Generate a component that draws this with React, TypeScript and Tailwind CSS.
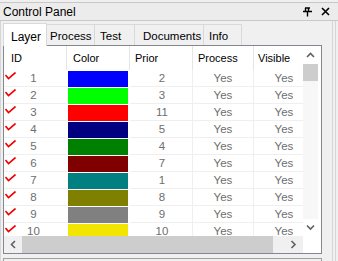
import React from "react";

const rows = [
  { id: 1, color: "#0000ff", prior: 2 },
  { id: 2, color: "#00ff00", prior: 3 },
  { id: 3, color: "#ff0000", prior: 11 },
  { id: 4, color: "#000080", prior: 5 },
  { id: 5, color: "#008000", prior: 4 },
  { id: 6, color: "#800000", prior: 7 },
  { id: 7, color: "#008080", prior: 1 },
  { id: 8, color: "#808000", prior: 8 },
  { id: 9, color: "#808080", prior: 9 },
  { id: 10, color: "#f2e600", prior: 10 },
];

const tabs = [
  { name: "Layer", w: "w-[44px]", pl: "pl-[7px]" },
  { name: "Process", w: "w-[48px]", pl: "pl-[3px]" },
  { name: "Test", w: "w-[40px]", pl: "pl-[5px]" },
  { name: "Documents", w: "w-[69px]", pl: "pl-[8px]" },
  { name: "Info", w: "w-[38px]", pl: "pl-[5px]" },
];

function Check() {
  return (
    <svg width="11" height="8" viewBox="0 0 11 8" className="mt-[2px] ml-[1px]">
      <polyline points="0.5,3 3.5,6.5 10.5,0.5" fill="none" stroke="#f00000" strokeWidth="1.6" />
    </svg>
  );
}

function Arrow({ dir }: { dir: "up" | "down" | "left" | "right" }) {
  const pts = {
    up: "1,6 4.5,2.5 8,6",
    down: "1,2.5 4.5,6 8,2.5",
    left: "6,1 2.5,4.5 6,8",
    right: "2.5,1 6,4.5 2.5,8",
  }[dir];
  return (
    <svg width="9" height="9" viewBox="0 0 9 9">
      <polyline points={pts} fill="none" stroke="#606060" strokeWidth="1.6" />
    </svg>
  );
}

export default function App() {
  return (
    <div
      className="w-[338px] h-[261px] bg-[#f0f0f0] overflow-hidden text-[11px] text-black"
      style={{ fontFamily: '"Liberation Sans", Arial, sans-serif' }}
    >
      {/* title bar */}
      <div className="mt-[2px] h-[19px] flex items-center border-y border-[#c8c8c8] bg-[#ececec] pl-[3px] pr-[8px]">
        <span className="text-[12px]">Control Panel</span>
        <div className="ml-auto flex items-center gap-[9px]">
          <svg width="9" height="10" viewBox="0 0 9 10">
            <path d="M0 4.5h9M2 1h5M2.5 1v3.5M5.5 1v3.5M4.5 4.5v5" stroke="#000" strokeWidth="1.4" fill="none" />
          </svg>
          <svg width="9" height="9" viewBox="0 0 9 9">
            <path d="M1 1l7 7M8 1l-7 7" stroke="#000" strokeWidth="1.6" />
          </svg>
        </div>
      </div>

      <div className="flex">
        <div className="w-[333px] border-l border-r border-[#d6d6d6]">
          {/* tabs */}
          <div className="flex items-end h-[23px] pl-[2px] mt-[1px]">
            {tabs.map((t, i) =>
              i === 0 ? (
                <div
                  key={t.name}
                  className={`${t.w} ${t.pl} h-[23px] bg-white border border-b-0 border-[#d9d9d9] relative z-10 -mb-px pt-[4px] text-[12px]`}
                >
                  {t.name}
                </div>
              ) : (
                <div
                  key={t.name}
                  className={`${t.w} ${t.pl} h-[21px] bg-[#f0f0f0] border border-l-0 border-b-0 border-[#d9d9d9] pt-[3px] text-[11.5px]`}
                >
                  {t.name}
                </div>
              )
            )}
          </div>

          {/* table frame */}
          <div className="ml-[2px] w-[319px] border border-[#828790] bg-white flex flex-col">
            <div className="flex h-[190px]">
              <div className="w-[299px] overflow-hidden">
                <div className="w-[314px]">
                  <div className="flex h-[24px] items-center">
                    <div className="w-[63px] h-full flex items-center pl-[7px] border-r border-[#e5e5e5]">ID</div>
                    <div className="w-[63px] h-full flex items-center pl-[6px] border-r border-[#e5e5e5]">Color</div>
                    <div className="w-[63px] h-full flex items-center pl-[5px] border-r border-[#e5e5e5]">Prior</div>
                    <div className="w-[61px] h-full flex items-center pl-[5px] border-r border-[#e5e5e5]">Process</div>
                    <div className="w-[60px] h-full flex items-center pl-[4px]">Visible</div>
                  </div>
                  {rows.map((r) => (
                    <div key={r.id} className="flex h-[17px] text-[11.5px] text-[#6e6e6e] leading-[17px]">
                      <div className="w-[63px] flex border-b border-[#efefef]">
                        <Check />
                        <span className="flex-1 text-center pr-[16px]">{r.id}</span>
                      </div>
                      <div className="w-[63px] pt-px pl-px pr-[2px]">
                        <div className="h-[16px]" style={{ background: r.color }} />
                      </div>
                      <div className="w-[63px] text-center border-b border-r border-[#efefef] pl-[2px]">{r.prior}</div>
                      <div className="w-[61px] text-center border-b border-r border-[#efefef]">Yes</div>
                      <div className="w-[60px] text-center border-b border-[#efefef]">Yes</div>
                    </div>
                  ))}
                </div>
              </div>
              {/* vertical scrollbar */}
              <div className="w-[18px] flex flex-col pr-[3px]">
                <div className="h-[18px] flex items-center justify-center">
                  <Arrow dir="up" />
                </div>
                <div className="h-[17px] bg-[#cdcdcd]" />
                <div className="flex-1 bg-[#f7f7f7]" />
                <div className="h-[17px] flex items-center justify-center">
                  <Arrow dir="down" />
                </div>
              </div>
            </div>
            {/* horizontal scrollbar */}
            <div className="flex h-[17px]">
              <div className="w-[299px] flex bg-[#f0f0f0]">
                <div className="w-[18px] flex items-center justify-center">
                  <Arrow dir="left" />
                </div>
                <div className="w-[251px] bg-[#cdcdcd]" />
                <div className="flex-1 flex items-center justify-end pr-[5px]">
                  <Arrow dir="right" />
                </div>
              </div>
              <div className="w-[18px] bg-white" />
            </div>
          </div>
          <div className="mt-[4px] ml-[2px] w-[319px] h-[10px] border-t border-l border-r border-[#a0a0a0]" />
        </div>
        <div className="ml-[2px] h-[240px] w-px bg-[#d6d6d6]" />
      </div>
    </div>
  );
}
